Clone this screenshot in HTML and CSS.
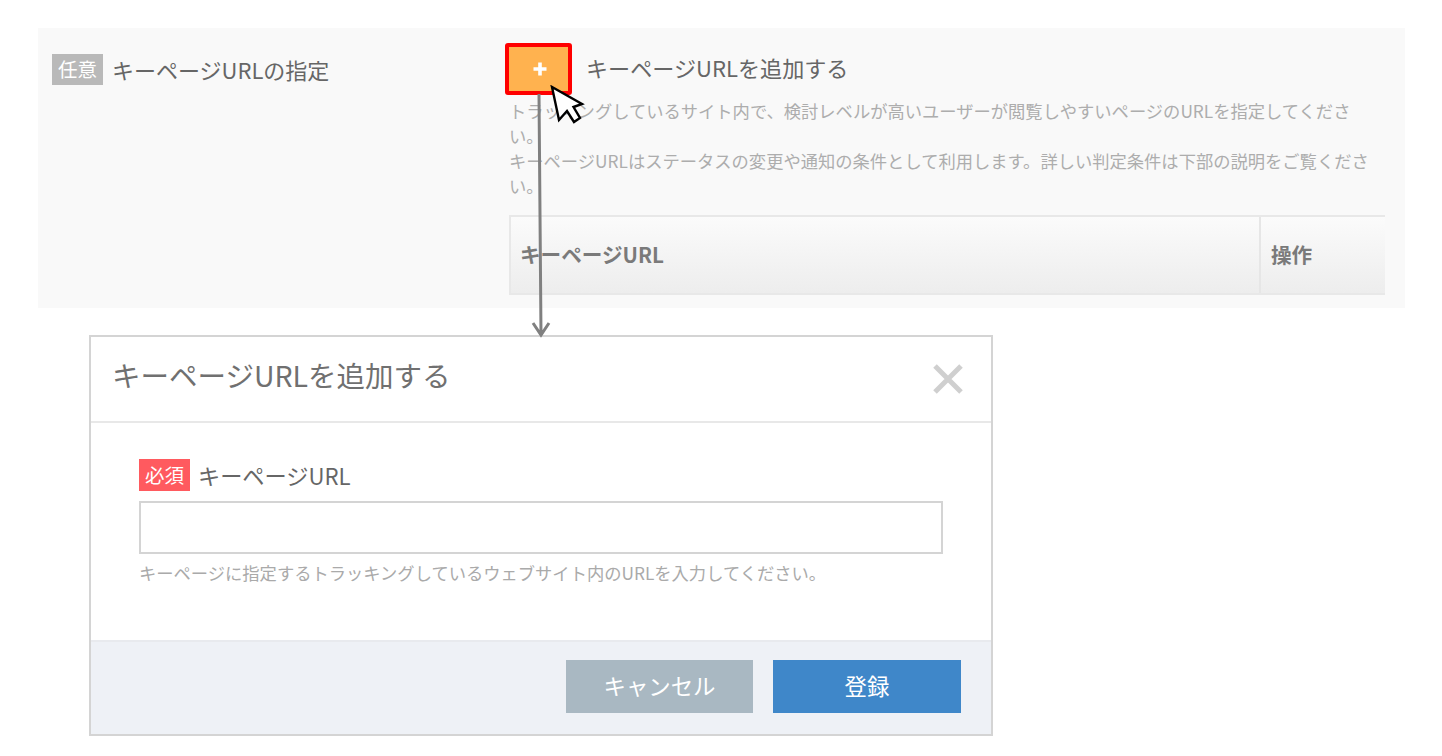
FILE: index.html
```html
<!DOCTYPE html>
<html lang="ja">
<head>
<meta charset="utf-8">
<title>キーページURL</title>
<link rel="stylesheet" href="styles.css">
</head>
<body>
<div class="stage">
  <section class="panel">
    <div class="field-label">
      <span class="badge badge-optional">任意</span>
      <span class="field-name">キーページURLの指定</span>
    </div>
    <div class="field-body">
      <div class="add-row">
        <button class="add-btn" type="button">
          <svg class="plus" width="16" height="16" viewBox="0 0 16 16"><path d="M8 1.500v13M1.500 8h13" stroke="#fff" stroke-width="3.600" fill="none"/></svg>
        </button>
        <span class="add-title">キーページURLを追加する</span>
      </div>
      <p class="desc">トラッキングしているサイト内で、検討レベルが高いユーザーが閲覧しやすいページのURLを指定してくださ<br>い。<br>キーページURLはステータスの変更や通知の条件として利用します。詳しい判定条件は下部の説明をご覧くださ<br>い。</p>
      <div class="table-head">
        <div class="col-url">キーページURL</div>
        <div class="col-op">操作</div>
      </div>
    </div>
  </section>

  <section class="modal">
    <header class="modal-head">
      <h2 class="modal-title">キーページURLを追加する</h2>
      <svg class="close" width="32" height="32" viewBox="0 0 32 32"><path d="M3 3l26 26M29 3L3 29" stroke="#cfcfcf" stroke-width="5" fill="none"/></svg>
    </header>
    <div class="modal-body">
      <div class="modal-label">
        <span class="badge badge-required">必須</span>
        <span class="modal-name">キーページURL</span>
      </div>
      <input class="url-input" type="text">
      <p class="hint">キーページに指定するトラッキングしているウェブサイト内のURLを入力してください。</p>
    </div>
    <footer class="modal-foot">
      <button class="btn btn-cancel" type="button">キャンセル</button>
      <button class="btn btn-submit" type="button">登録</button>
    </footer>
  </section>

  <svg class="arrow" width="24" height="246" viewBox="0 0 24 246"><path d="M9 0L11 241M3 229l8 12 8-12" stroke="#808080" stroke-width="3" fill="none"/></svg>
  <svg class="cursor" width="36" height="42" viewBox="0 0 36 42"><path d="M2 2L9 35L17 26L24 37L30 33L23.500 22L32 19Z" fill="#fff" stroke="#000" stroke-width="2.400" stroke-linejoin="miter"/></svg>
</div>
</body>
</html>
```
FILE: styles.css
```css
* { box-sizing: border-box; }
html, body { margin: 0; padding: 0; background: #fff; }
body {
  font-family: "Noto Sans CJK JP", "Open Sans", sans-serif;
  color: #666;
}
.stage { position: relative; width: 1442px; height: 756px; padding-top: 28px; overflow: hidden; }

.panel {
  display: flex;
  margin-left: 38px;
  width: 1367px;
  height: 280px;
  background: #f9f9f9;
  padding-top: 15px;
}
.field-label {
  display: flex;
  align-items: flex-start;
  gap: 9px;
  width: 467px;
  padding: 11px 0 0 14px;
}
.badge {
  display: inline-flex;
  align-items: center;
  justify-content: center;
  width: 51px;
  height: 32px;
  padding-bottom: 2px;
  color: #fff;
  font-size: 19.500px;
  flex: none;
}
.badge-optional { background: #b9b9b9; height: 31px; }
.badge-required { background: #ff5a5f; }
.field-name { font-size: 22px; line-height: 30px; color: #666; }

.field-body { width: 876px; margin-left: 4px; }
.add-row { display: flex; align-items: center; margin-left: -4px; gap: 14px; }
.add-btn {
  display: flex;
  align-items: center;
  justify-content: center;
  width: 67px;
  height: 52px;
  padding: 0 0 0 2px;
  background: #ffb24f;
  border: 4px solid #f00;
  border-radius: 3px;
}
.add-title { font-size: 22.100px; line-height: 48px; color: #666; margin-top: -5px; }
.desc {
  margin: 3px 0 0;
  font-size: 17.300px;
  line-height: 25px;
  color: #adadad;
  white-space: nowrap;
}
.table-head {
  display: flex;
  height: 80px;
  margin-top: 17px;
  border: 2px solid #e8e8e8;
  border-right: 0;
  background: linear-gradient(#fbfbfb, #ededed);
  font-weight: 700;
  font-size: 20.600px;
  color: #7a7a7a;
}
.col-url { width: 750px; padding-left: 9px; line-height: 75px; border-right: 2px solid #e6e6e6; }
.col-op { padding-left: 10px; line-height: 75px; }

.modal {
  display: flex;
  flex-direction: column;
  margin: 27px 0 0 89px;
  width: 904px;
  height: 401px;
  border: 2px solid #d4d4d4;
  background: #fff;
}
.modal-head {
  display: flex;
  align-items: center;
  justify-content: space-between;
  height: 86px;
  padding: 0 27px 0 21px;
  border-bottom: 2px solid #e8e8e8;
}
.modal-title { margin: -10px 0 0; font-size: 28.500px; font-weight: 400; color: #707070; }
.modal-body { flex: 1; padding: 36px 48px 0; }
.modal-label { display: flex; align-items: center; gap: 8px; height: 32px; }
.modal-name { font-size: 22.200px; color: #666; }
.url-input {
  display: block;
  width: 804px;
  height: 53px;
  margin-top: 10px;
  border: 2px solid #d4d4d4;
  background: #fff;
}
.hint { margin: 7px 0 0; font-size: 17.300px; line-height: 24px; color: #aaa; white-space: nowrap; }
.modal-foot {
  display: flex;
  gap: 20px;
  height: 94px;
  padding: 18px 30px 0 0;
  justify-content: flex-end;
  background: #eef1f6;
  border-top: 2px solid #e8eaee;
}
.btn {
  width: 188px;
  height: 53px;
  border: 0;
  color: #fff;
  font-family: inherit;
  font-size: 22.400px;
  line-height: 48px;
  padding-bottom: 6px;
}
.btn-cancel { background: #a9b8c2; width: 187px; }
.btn-submit { background: #3f87c9; }

.arrow { position: absolute; left: 530px; top: 94px; }
.cursor { position: absolute; left: 550px; top: 85px; }
```
